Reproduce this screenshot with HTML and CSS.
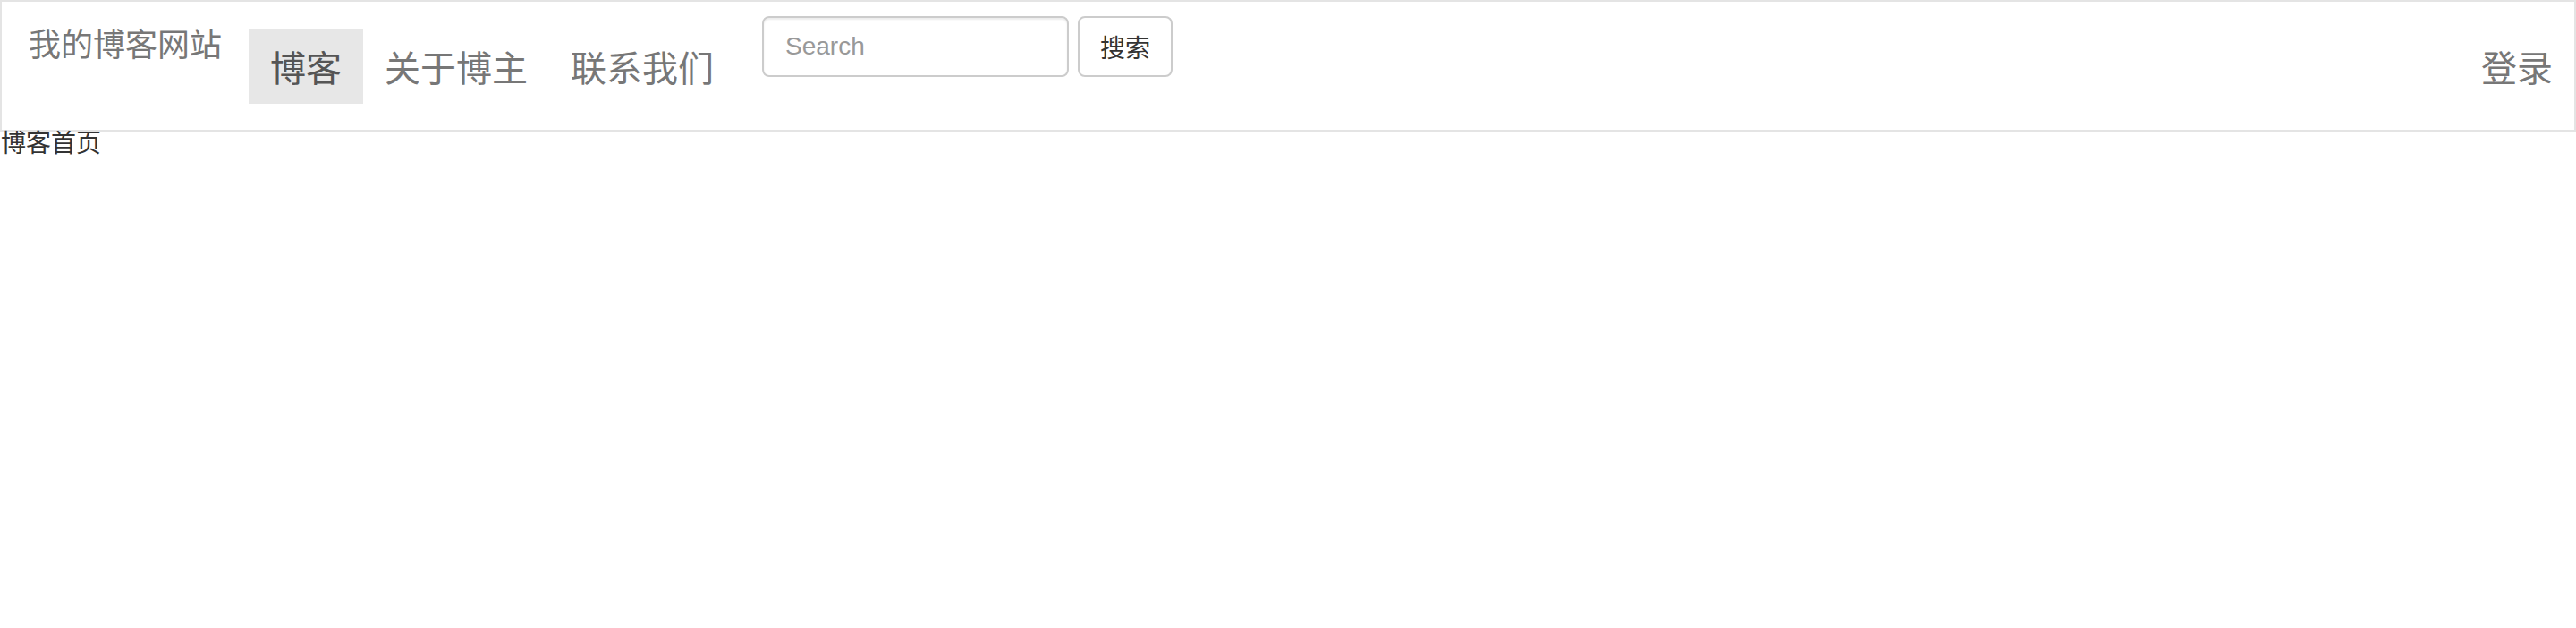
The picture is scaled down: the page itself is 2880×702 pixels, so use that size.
FILE: index.html
```html
<!DOCTYPE html>
<html lang="zh-CN">
<head>
<meta charset="utf-8">
<title>我的博客网站</title>
<link rel="stylesheet" href="styles.css">
</head>
<body>
<nav class="navbar">
  <a class="brand" href="#">我的博客网站</a>
  <ul class="nav">
    <li><a class="nav-link active" href="#">博客</a></li>
    <li><a class="nav-link" href="#">关于博主</a></li>
    <li><a class="nav-link" href="#">联系我们</a></li>
  </ul>
  <form class="search-form">
    <input class="search-input" type="text" placeholder="Search">
    <button class="search-btn" type="button">搜索</button>
  </form>
  <ul class="nav nav-right">
    <li><a class="nav-link" href="#">登录</a></li>
  </ul>
</nav>
<div class="page-title">博客首页</div>
</body>
</html>
```

FILE: styles.css
```css
* {
  box-sizing: border-box;
}

html, body {
  margin: 0;
  padding: 0;
  background: #fff;
}

body {
  font-family: "Liberation Sans", "Noto Sans CJK SC", sans-serif;
  color: #333;
}

.navbar {
  display: flex;
  align-items: flex-start;
  height: 147px;
  border: 2px solid #e4e4e4;
  background: #fff;
}

.brand {
  display: block;
  padding: 31px 30px 0 30px;
  font-size: 36px;
  line-height: 36px;
  color: #777;
  text-decoration: none;
  white-space: nowrap;
}

.nav {
  display: flex;
  list-style: none;
  margin: 30px 0 0 0;
  padding: 0;
}

.nav-link {
  display: block;
  padding: 25px 24px 19px 24px;
  font-size: 40px;
  line-height: 40px;
  color: #777;
  text-decoration: none;
  white-space: nowrap;
}

.nav-link.active {
  background: #e7e7e7;
  color: #555;
}

.search-form {
  display: flex;
  gap: 10px;
  margin: 16px 0 0 0;
  padding: 0 0 0 30px;
}

.search-input {
  width: 343px;
  height: 68px;
  padding: 0 24px;
  border: 2px solid #ccc;
  border-radius: 8px;
  font-family: "Liberation Sans", "Noto Sans CJK SC", sans-serif;
  font-size: 28px;
  color: #555;
  background: #fff;
  box-shadow: inset 0 2px 2px rgba(0, 0, 0, 0.075);
  outline: none;
}

.search-input::placeholder {
  color: #999;
}

.search-btn {
  width: 106px;
  height: 68px;
  padding: 0;
  border: 2px solid #ccc;
  border-radius: 8px;
  background: #fff;
  font-family: "Liberation Sans", "Noto Sans CJK SC", sans-serif;
  font-size: 28px;
  color: #333;
}

.nav-right {
  margin-left: auto;
}

.page-title {
  font-size: 28px;
  line-height: 28px;
  color: #333;
  padding-left: 1px;
}
```
